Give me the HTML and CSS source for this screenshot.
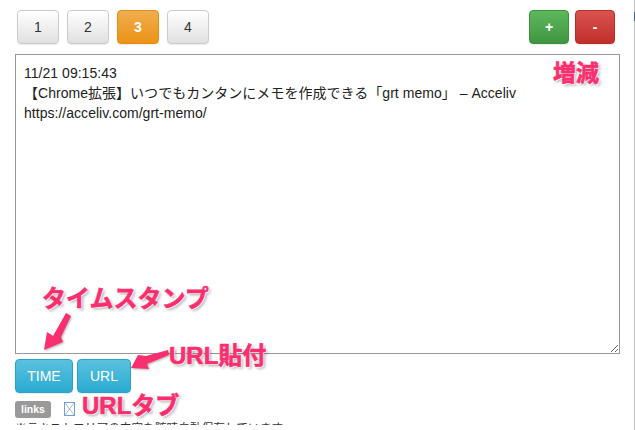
FILE: index.html
```html
<!DOCTYPE html>
<html lang="ja">
<head>
  <meta charset="UTF-8" />
  <title>grt memo</title>
  <link rel="stylesheet" href="styles.css">
</head>
<body>
  <div class="page">
    <div class="toolbar">
      <div class="tabs">
        <button class="btn">1</button>
        <button class="btn">2</button>
        <button class="btn active">3</button>
        <button class="btn">4</button>
      </div>
      <div class="tabs-edit">
        <button class="btn plus">+</button>
        <button class="btn minus">-</button>
      </div>
    </div>

    <textarea class="memo" spellcheck="false">11/21 09:15:43
【Chrome拡張】いつでもカンタンにメモを作成できる「grt memo」 – Acceliv
https://acceliv.com/grt-memo/</textarea>

    <div class="actions">
      <button class="btn info time">TIME</button>
      <button class="btn info url">URL</button>
    </div>

    <div class="links">
      <span class="label">links</span>
      <svg class="broken" width="11" height="14" viewBox="0 0 11 14">
        <rect x="0.5" y="0.5" width="10" height="13" fill="none" stroke="#6fa3d8"/>
        <path d="M1 1L10 13M10 1L1 13" stroke="#8a9db0" stroke-width="0.7" fill="none"/>
      </svg>
    </div>
    <p class="note">※テキストエリアの内容を随時自動保存しています</p>
  </div>

  <!-- annotations on top of the screenshot -->
  <span class="note-red zoufuku">増減</span>
  <span class="note-red stamp">タイムスタンプ</span>
  <span class="note-red paste">URL貼付</span>
  <span class="note-red urltab">URLタブ</span>
  <svg class="arrows" width="635" height="430" viewBox="0 0 635 430">
    <path d="M71 316L61 337L63 342L44 350L47 332L53 336L66 313Z" />
    <path d="M168 350L146 356L138 355L131 368L149 369L147 364L169 355Z" />
  </svg>
  <div class="scroll-edge"></div>
</body>
</html>
```

FILE: styles.css
```css
* { box-sizing: border-box; }

html, body {
  margin: 0;
  height: 430px;
  overflow: hidden;
  background: #fff;
}

body {
  position: relative;
  font-family: "Liberation Sans", "Noto Sans CJK JP", sans-serif;
  color: #222;
}

.page {
  width: 635px;
  height: 425px;
  padding: 10px 15px 0;
  overflow: hidden;
}

.toolbar {
  display: flex;
  justify-content: space-between;
  padding: 0 0 0 2px;
  margin-bottom: 10px;
}

.tabs, .tabs-edit {
  display: flex;
  gap: 8px;
}

.tabs-edit { gap: 6px; padding-right: 5px; }

.btn {
  width: 42px;
  height: 34px;
  padding: 0;
  border: 1px solid #ccc;
  border-radius: 4px;
  font-family: inherit;
  font-size: 14px;
  color: #333;
  background: linear-gradient(#fff, #e0e0e0);
  box-shadow: 0 1px 1px rgba(0, 0, 0, 0.08);
}

.btn.active {
  color: #fff;
  font-weight: bold;
  border-color: #e38d13;
  background: linear-gradient(#f0ad4e, #eb9316);
}

.plus, .minus {
  width: 40px;
  color: #fff;
  font-weight: bold;
}

.plus {
  border-color: #3e8f3e;
  background: linear-gradient(#5cb85c, #419641);
}

.minus {
  border-color: #b92c28;
  background: linear-gradient(#d9534f, #c12e2a);
}

.memo {
  display: block;
  width: 605px;
  height: 300px;
  padding: 8px 8px;
  border: 1px solid #999;
  border-radius: 0;
  outline: none;
  font-family: inherit;
  font-size: 14px;
  letter-spacing: 0.03px;
  line-height: 20px;
  color: #222;
  background: #fff;
}

.actions {
  display: flex;
  gap: 4px;
  margin-top: 5px;
}

.info {
  height: 34px;
  color: #fff;
  border-color: #28a4c9;
  background: linear-gradient(#5bc0de, #2aabd2);
}

.time { width: 58px; }
.url { width: 54px; }

.links {
  display: flex;
  align-items: center;
  gap: 13px;
  margin-top: 7px;
  height: 18px;
}

.label {
  width: 36px;
  height: 17px;
  border-radius: 3px;
  background: #999;
  color: #fff;
  font-size: 10.5px;
  font-weight: bold;
  line-height: 17px;
  text-align: center;
}

.note {
  margin: 1px 0 0;
  font-size: 11.7px;
  line-height: 17px;
  color: #333;
}

.note-red {
  position: absolute;
  font-size: 24px;
  line-height: 28px;
  font-weight: bold;
  color: #fb2f6f;
  white-space: nowrap;
  -webkit-text-stroke: 0.6px #fb2f6f;
  text-shadow: 1px 1px 1px #fff, 2px 2px 3px rgba(0, 0, 0, 0.35);
}

.zoufuku { left: 553px; top: 59px; font-size: 23px; }
.stamp { left: 42px; top: 285px; }
.paste { left: 169px; top: 342px; }
.urltab { left: 82px; top: 392px; }

.arrows {
  position: absolute;
  left: 0;
  top: 0;
  fill: #fb2f6f;
  filter: drop-shadow(1px 1px 1px rgba(0, 0, 0, 0.3));
  pointer-events: none;
}

.scroll-edge {
  position: absolute;
  right: 0;
  top: 0;
  width: 1px;
  height: 430px;
  background: linear-gradient(#c4c4c4 12px, #3f5f85 12px, #3f5f85 21px, #c4c4c4 21px);
}
```
